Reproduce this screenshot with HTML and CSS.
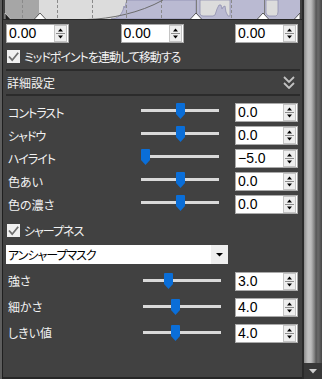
FILE: index.html
```html
<!DOCTYPE html>
<html lang="ja">
<head>
<meta charset="utf-8">
<link rel="stylesheet" href="styles.css">
</head>
<body>
<div class="app">
  <div class="edge"></div>
  <div class="panel">
    <svg class="hist" viewBox="3 0 299 20" width="299" height="20">
      <rect x="5" y="0" width="295" height="19" fill="#dcdcdc"/>
      <rect x="5" y="0" width="34" height="19" fill="#a6a6a6"/>
      <rect x="196" y="0" width="104" height="19" fill="#babad2"/>
      <path d="M111 19 C118 18.5 121 15 123 10 L124 6 L125 8 L126 3 L127 0 L196 0 L196 19 Z" fill="#babad2" stroke="#8e8eae" stroke-width="0.8"/>
      <path d="M200 0 V14 Q201 16 203 16 L213 16 L215 15 L217 9 L219 5 L221 5 L222 9 L223 7 L225 6 L226 12 L228 16 L230 16 V0 Z" fill="#dcdcdc" stroke="#9191b0" stroke-width="0.8"/>
      <path d="M266 0 V13 Q267 16 269 16 L276 16 Q278 15 278 12 V0 Z" fill="#dcdcdc" stroke="#9191b0" stroke-width="0.8"/>
      <g stroke="#8a8a8a" stroke-width="1" stroke-dasharray="3 2">
        <line x1="22.5" y1="0" x2="22.5" y2="19"/>
        <line x1="57.5" y1="0" x2="57.5" y2="19"/>
        <line x1="92.5" y1="0" x2="92.5" y2="19"/>
        <line x1="126.5" y1="0" x2="126.5" y2="19"/>
        <line x1="161.5" y1="0" x2="161.5" y2="19"/>
        <line x1="231.5" y1="0" x2="231.5" y2="19"/>
      </g>
      <line x1="196.5" y1="0" x2="196.5" y2="19" stroke="#7c7c7c"/>
      <line x1="264.5" y1="0" x2="264.5" y2="19" stroke="#7c7c7c"/>
      <path d="M87 19.5 C110 19 140 13 163 0" fill="none" stroke="#6c6c6c" stroke-width="1"/>
      <polygon points="5,13 5,19.5 11,19.5" fill="#1e1e1e" stroke="#f0f0f0" stroke-width="0.6"/>
      <polygon points="34,19.5 40,13 46,19.5" fill="#ffffff" stroke="#3a3a3a" stroke-width="0.8"/>
      <polygon points="190,19.5 196,13 202,19.5" fill="#ffffff" stroke="#3a3a3a" stroke-width="0.8"/>
      <polygon points="257,19.5 263,13 269,19.5" fill="#ffffff" stroke="#3a3a3a" stroke-width="0.8"/>
      <polygon points="300,13 300,19.5 294,19.5" fill="#ffffff" stroke="#3a3a3a" stroke-width="0.8"/>
      <rect x="3" y="19" width="299" height="1" fill="#262626"/>
    </svg>

    <div class="levels">
      <div class="spin"><span class="val">0.00</span><svg viewBox="0 0 13 17"><rect x="0.5" y="0.5" width="12" height="16" fill="#eeeeee" stroke="#c4c4c4"/><polygon points="4,6.5 9,6.5 6.5,3.5" fill="#000"/><line x1="2" y1="8.5" x2="11" y2="8.5" stroke="#8c8c8c"/><polygon points="4,10.5 9,10.5 6.5,13.5" fill="#000"/></svg></div>
      <div class="spin"><span class="val">0.00</span><svg viewBox="0 0 13 17"><rect x="0.5" y="0.5" width="12" height="16" fill="#eeeeee" stroke="#c4c4c4"/><polygon points="4,6.5 9,6.5 6.5,3.5" fill="#000"/><line x1="2" y1="8.5" x2="11" y2="8.5" stroke="#8c8c8c"/><polygon points="4,10.5 9,10.5 6.5,13.5" fill="#000"/></svg></div>
      <div class="spin"><span class="val">0.00</span><svg viewBox="0 0 13 17"><rect x="0.5" y="0.5" width="12" height="16" fill="#eeeeee" stroke="#c4c4c4"/><polygon points="4,6.5 9,6.5 6.5,3.5" fill="#000"/><line x1="2" y1="8.5" x2="11" y2="8.5" stroke="#8c8c8c"/><polygon points="4,10.5 9,10.5 6.5,13.5" fill="#000"/></svg></div>
    </div>

    <div class="check-row first">
      <span class="cb"><svg viewBox="0 0 13 13"><polyline points="2,6.5 5.2,10.2 11.2,2.8" fill="none" stroke="#6e6e6e" stroke-width="1.8"/></svg></span>
      <span class="check-label kana">ミッドポイントを連動して移動する</span>
    </div>

    <div class="sep first-sep"></div>
    <div class="section-head">
      <span>詳細設定</span>
      <svg viewBox="0 0 12 13" width="12" height="13"><polyline points="1,1 6,6 11,1" fill="none" stroke="#c2c2c2" stroke-width="1.8"/><polyline points="1,7 6,12 11,7" fill="none" stroke="#c2c2c2" stroke-width="1.8"/></svg>
    </div>
    <div class="sep"></div>

    <div class="rows rows-a">
      <div class="row"><span class="label kana">コントラスト</span><div class="slider"><div class="track"></div><svg class="thumb" style="left:35px" viewBox="0 0 9 16"><path d="M1 0 H8 Q9 0 9 1 V11 L4.5 16 L0 11 V1 Q0 0 1 0 Z" fill="#0a6ed8"/></svg></div><div class="spin"><span class="val">0.0</span><svg viewBox="0 0 13 17"><rect x="0.5" y="0.5" width="12" height="16" fill="#eeeeee" stroke="#c4c4c4"/><polygon points="4,6.5 9,6.5 6.5,3.5" fill="#000"/><line x1="2" y1="8.5" x2="11" y2="8.5" stroke="#8c8c8c"/><polygon points="4,10.5 9,10.5 6.5,13.5" fill="#000"/></svg></div></div>
      <div class="row"><span class="label kana">シャドウ</span><div class="slider"><div class="track"></div><svg class="thumb" style="left:35px" viewBox="0 0 9 16"><path d="M1 0 H8 Q9 0 9 1 V11 L4.5 16 L0 11 V1 Q0 0 1 0 Z" fill="#0a6ed8"/></svg></div><div class="spin"><span class="val">0.0</span><svg viewBox="0 0 13 17"><rect x="0.5" y="0.5" width="12" height="16" fill="#eeeeee" stroke="#c4c4c4"/><polygon points="4,6.5 9,6.5 6.5,3.5" fill="#000"/><line x1="2" y1="8.5" x2="11" y2="8.5" stroke="#8c8c8c"/><polygon points="4,10.5 9,10.5 6.5,13.5" fill="#000"/></svg></div></div>
      <div class="row"><span class="label kana">ハイライト</span><div class="slider"><div class="track"></div><svg class="thumb" style="left:0px" viewBox="0 0 9 16"><path d="M1 0 H8 Q9 0 9 1 V11 L4.5 16 L0 11 V1 Q0 0 1 0 Z" fill="#0a6ed8"/></svg></div><div class="spin"><span class="val">−5.0</span><svg viewBox="0 0 13 17"><rect x="0.5" y="0.5" width="12" height="16" fill="#eeeeee" stroke="#c4c4c4"/><polygon points="4,6.5 9,6.5 6.5,3.5" fill="#000"/><line x1="2" y1="8.5" x2="11" y2="8.5" stroke="#8c8c8c"/><polygon points="4,10.5 9,10.5 6.5,13.5" fill="#000"/></svg></div></div>
      <div class="row"><span class="label">色あい</span><div class="slider"><div class="track"></div><svg class="thumb" style="left:35px" viewBox="0 0 9 16"><path d="M1 0 H8 Q9 0 9 1 V11 L4.5 16 L0 11 V1 Q0 0 1 0 Z" fill="#0a6ed8"/></svg></div><div class="spin"><span class="val">0.0</span><svg viewBox="0 0 13 17"><rect x="0.5" y="0.5" width="12" height="16" fill="#eeeeee" stroke="#c4c4c4"/><polygon points="4,6.5 9,6.5 6.5,3.5" fill="#000"/><line x1="2" y1="8.5" x2="11" y2="8.5" stroke="#8c8c8c"/><polygon points="4,10.5 9,10.5 6.5,13.5" fill="#000"/></svg></div></div>
      <div class="row"><span class="label">色の濃さ</span><div class="slider"><div class="track"></div><svg class="thumb" style="left:35px" viewBox="0 0 9 16"><path d="M1 0 H8 Q9 0 9 1 V11 L4.5 16 L0 11 V1 Q0 0 1 0 Z" fill="#0a6ed8"/></svg></div><div class="spin"><span class="val">0.0</span><svg viewBox="0 0 13 17"><rect x="0.5" y="0.5" width="12" height="16" fill="#eeeeee" stroke="#c4c4c4"/><polygon points="4,6.5 9,6.5 6.5,3.5" fill="#000"/><line x1="2" y1="8.5" x2="11" y2="8.5" stroke="#8c8c8c"/><polygon points="4,10.5 9,10.5 6.5,13.5" fill="#000"/></svg></div></div>
    </div>

    <div class="check-row sharp">
      <span class="cb"><svg viewBox="0 0 13 13"><polyline points="2,6.5 5.2,10.2 11.2,2.8" fill="none" stroke="#6e6e6e" stroke-width="1.8"/></svg></span>
      <span class="check-label kana">シャープネス</span>
    </div>

    <div class="select">
      <span class="select-text kana">アンシャープマスク</span>
      <span class="select-btn"><svg viewBox="0 0 7 4" width="7" height="4"><polygon points="0,0 7,0 3.5,3.5" fill="#000"/></svg></span>
    </div>

    <div class="rows rows-b">
      <div class="row"><span class="label">強さ</span><div class="slider"><div class="track"></div><svg class="thumb" style="left:21px" viewBox="0 0 9 16"><path d="M1 0 H8 Q9 0 9 1 V11 L4.5 16 L0 11 V1 Q0 0 1 0 Z" fill="#0a6ed8"/></svg></div><div class="spin"><span class="val">3.0</span><svg viewBox="0 0 13 17"><rect x="0.5" y="0.5" width="12" height="16" fill="#eeeeee" stroke="#c4c4c4"/><polygon points="4,6.5 9,6.5 6.5,3.5" fill="#000"/><line x1="2" y1="8.5" x2="11" y2="8.5" stroke="#8c8c8c"/><polygon points="4,10.5 9,10.5 6.5,13.5" fill="#000"/></svg></div></div>
      <div class="row"><span class="label">細かさ</span><div class="slider"><div class="track"></div><svg class="thumb" style="left:28px" viewBox="0 0 9 16"><path d="M1 0 H8 Q9 0 9 1 V11 L4.5 16 L0 11 V1 Q0 0 1 0 Z" fill="#0a6ed8"/></svg></div><div class="spin"><span class="val">4.0</span><svg viewBox="0 0 13 17"><rect x="0.5" y="0.5" width="12" height="16" fill="#eeeeee" stroke="#c4c4c4"/><polygon points="4,6.5 9,6.5 6.5,3.5" fill="#000"/><line x1="2" y1="8.5" x2="11" y2="8.5" stroke="#8c8c8c"/><polygon points="4,10.5 9,10.5 6.5,13.5" fill="#000"/></svg></div></div>
      <div class="row"><span class="label">しきい値</span><div class="slider"><div class="track"></div><svg class="thumb" style="left:28px" viewBox="0 0 9 16"><path d="M1 0 H8 Q9 0 9 1 V11 L4.5 16 L0 11 V1 Q0 0 1 0 Z" fill="#0a6ed8"/></svg></div><div class="spin"><span class="val">4.0</span><svg viewBox="0 0 13 17"><rect x="0.5" y="0.5" width="12" height="16" fill="#eeeeee" stroke="#c4c4c4"/><polygon points="4,6.5 9,6.5 6.5,3.5" fill="#000"/><line x1="2" y1="8.5" x2="11" y2="8.5" stroke="#8c8c8c"/><polygon points="4,10.5 9,10.5 6.5,13.5" fill="#000"/></svg></div></div>
    </div>
  </div>
  <div class="scroll">
    <div class="scroll-thumb"></div>
    <div class="scroll-btn"><svg viewBox="0 0 8 5" width="8" height="5"><polygon points="0,0 8,0 4,4.5" fill="#cfcfcf"/></svg></div>
  </div>
</div>
</body>
</html>
```

FILE: styles.css
```css
* { box-sizing: border-box; }
html, body { margin: 0; padding: 0; }
body {
  width: 322px;
  height: 379px;
  overflow: hidden;
  background: #414141;
  font-family: "Noto Sans CJK JP", "Noto Sans", sans-serif;
  font-size: 12px;
  color: #f2f2f2;
}
.check-label, .label, .section-head span, .select-text {
  font-family: "Noto Sans CJK JP", sans-serif;
  font-variant-east-asian: proportional-width;
  font-feature-settings: "palt";
  font-kerning: normal;
}
.kana { letter-spacing: -1px; }
.app { display: flex; height: 379px; }
.edge {
  width: 3px;
  flex: none;
  background: linear-gradient(to right, #5e5e5e 0 2px, #1f1f1f 2px 3px);
}
.panel {
  width: 299px;
  flex: none;
  display: flex;
  flex-direction: column;
  background: #414141;
  border-bottom: 2px solid #262626;
}
.hist { display: block; width: 299px; height: 20px; flex: none; }

.levels {
  display: flex;
  justify-content: space-between;
  margin: 4px 4px 0 3px;
}
.spin {
  width: 63px;
  height: 19px;
  background: #ffffff;
  border: 1px solid #a9a9a9;
  display: flex;
  align-items: center;
  flex: none;
}
.spin .val {
  flex: 1;
  padding-left: 2px;
  font-family: "Liberation Sans Narrow", "Liberation Sans", sans-serif;
  font-size: 14px;
  line-height: 17px;
  color: #000;
}
.spin svg { width: 13px; height: 17px; margin-right: 1px; flex: none; }

.check-row {
  display: flex;
  align-items: center;
  gap: 4px;
  height: 13px;
  margin-left: 4px;
}
.check-row.first { margin-top: 7px; }
.check-row.sharp { margin-top: 8px; }
.cb { width: 13px; height: 13px; background: #f0f0f0; flex: none; display: block; }
.cb svg { display: block; width: 13px; height: 13px; }
.check-label { line-height: 13px; white-space: nowrap; }

.sep { height: 2px; background: #2b2b2b; margin: 0 2px 0 3px; flex: none; }
.first-sep { margin-top: 6px; }
.section-head {
  height: 23px;
  display: flex;
  align-items: center;
  justify-content: space-between;
  padding: 0 7px 0 4px;
}
.section-head svg { display: block; }

.rows { display: flex; flex-direction: column; padding: 0 4px 0 5px; }
.rows-a { margin-top: 5px; }
.rows-b { margin-top: 4px; }
.row {
  display: grid;
  grid-template-columns: 1fr 78px 63px;
  column-gap: 16px;
  align-items: center;
  height: 23px;
}
.rows-b .row { height: 26px; column-gap: 14px; }
.label { line-height: 14px; white-space: nowrap; }
.slider { position: relative; height: 16px; align-self: start; margin-top: 2px; }
.rows-b .slider { margin-top: 5px; }
.track { position: absolute; left: 0; right: 0; top: 6px; height: 3px; background: #d9d9d9; }
.thumb { position: absolute; top: 0; width: 9px; height: 16px; display: block; }

.select {
  margin: 8px 74px 0 3px;
  height: 19px;
  background: #ffffff;
  display: flex;
  align-items: center;
}
.select-text { flex: 1; color: #000; padding-left: 2px; line-height: 19px; }
.select-btn {
  width: 17px;
  height: 19px;
  background: #efefef;
  display: flex;
  align-items: center;
  justify-content: center;
}
.select-btn svg { display: block; }

.scroll {
  width: 20px;
  flex: none;
  display: flex;
  flex-direction: column;
  border-left: 2px solid #2a2a2a;
}
.scroll-thumb {
  flex: 1;
  background: linear-gradient(to right,
    #8a8a8a 0px, #a8a8a8 2px, #c0c0c0 4px, #bcbcbc 7px, #9a9a9a 9px,
    #747474 11px, #555555 12px, #6a6a6a 14px, #5a5a5a 16px, #454545 18px);
}
.scroll-btn {
  height: 16px;
  background: #383838;
  display: flex;
  align-items: center;
  justify-content: center;
}
.scroll-btn svg { display: block; }
```
